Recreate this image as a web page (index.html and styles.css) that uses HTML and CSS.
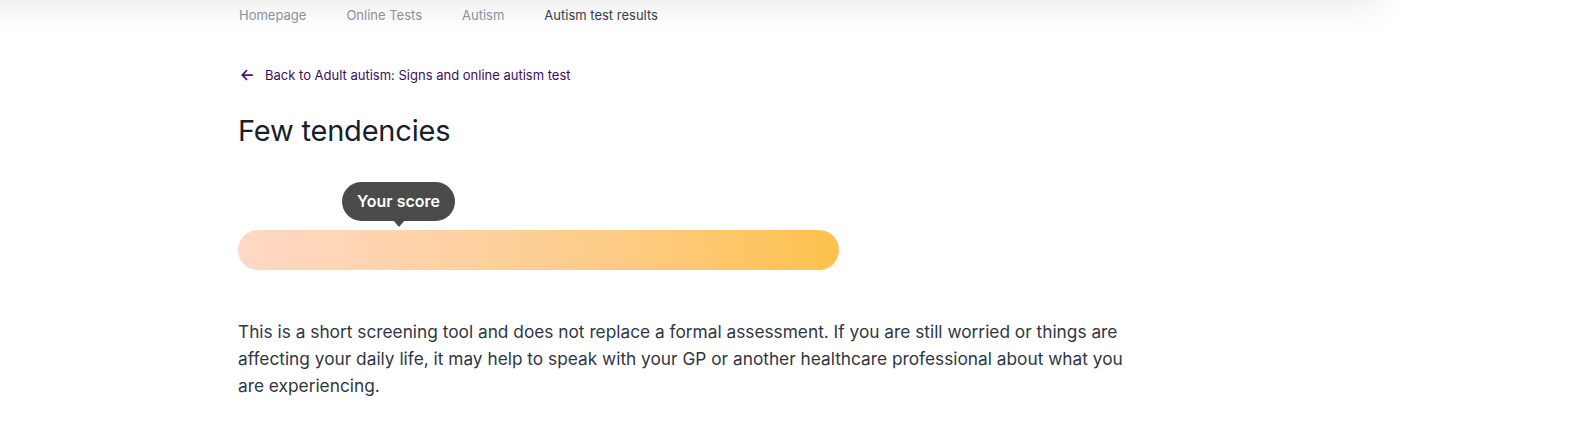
FILE: index.html
```html
<!DOCTYPE html>
<html lang="en">
<head>
<meta charset="utf-8">
<title>Autism test results</title>
<link rel="stylesheet" href="styles.css">
</head>
<body>
<div class="topshadow"></div>
<main class="page">
  <nav class="crumbs">
    <a class="crumb" href="#">Homepage</a>
    <a class="crumb" href="#">Online Tests</a>
    <a class="crumb" href="#">Autism</a>
    <span class="crumb current">Autism test results</span>
  </nav>
  <a class="back" href="#">
    <svg class="back-icon" viewBox="0 0 16 16" width="14" height="14" aria-hidden="true"><path d="M14 8H2.5M7.5 3L2.5 8l5 5" fill="none" stroke="currentColor" stroke-width="2" stroke-linecap="round" stroke-linejoin="round"/></svg>
    <span>Back to Adult autism: Signs and online autism test</span>
  </a>
  <h1 class="title">Few tendencies</h1>
  <div class="scale">
    <div class="tooltip">Your score</div>
    <div class="bar"></div>
  </div>
  <p class="note">This is a short screening tool and does not replace a formal assessment. If you are still worried or things are affecting your daily life, it may help to speak with your GP or another healthcare professional about what you are experiencing.</p>
</main>
</body>
</html>
```

FILE: styles.css
```css
html, body {
  margin: 0;
  padding: 0;
  background: #ffffff;
}
body {
  font-family: Inter, "Noto Sans", sans-serif;
  position: relative;
  overflow: hidden;
  height: 435px;
}
.topshadow {
  position: absolute;
  top: -60px;
  left: -40px;
  width: 1420px;
  height: 60px;
  background: #fff;
  box-shadow: 0 6px 36px rgba(0, 0, 0, 0.09);
}
.page {
  width: 900px;
  margin-left: 239px;
  display: flex;
  flex-direction: column;
}
.crumbs {
  display: flex;
  gap: 40px;
  padding-top: 7px;
  font-size: 13px;
  line-height: 17px;
}
.crumb {
  color: #8d95a5;
  text-decoration: none;
}
.crumb.current {
  color: #3a3f47;
}
.back {
  margin-top: 42px;
  display: flex;
  align-items: center;
  gap: 11px;
  color: #3c0d5c;
  font-size: 13px;
  line-height: 18px;
  text-decoration: none;
  padding-left: 1px;
}
.back-icon {
  color: #4b1470;
}
.title {
  margin: 27px 0 0 -1px;
  font-size: 29px;
  font-weight: 400;
  line-height: 40px;
  color: #17202e;
  letter-spacing: -0.2px;
}
.scale {
  position: relative;
  margin-top: 31px;
  margin-left: -1px;
  width: 601px;
}
.tooltip {
  position: relative;
  margin-left: 104px;
  width: 113px;
  height: 39px;
  border-radius: 20px;
  background: #4a4a4a;
  color: #fff;
  font-size: 16px;
  font-weight: 600;
  line-height: 39px;
  text-align: center;
  margin-bottom: 9px;
}
.tooltip::after {
  content: "";
  position: absolute;
  left: 50%;
  bottom: -6px;
  margin-left: -6px;
  border-left: 6px solid transparent;
  border-right: 6px solid transparent;
  border-top: 7px solid #4a4a4a;
}
.bar {
  height: 40px;
  border-radius: 20px;
  background: linear-gradient(90deg, #ffd8c6 0%, #fed2a4 35%, #fdcb83 65%, #fdc24c 100%);
}
.note {
  margin: 48px 0 0 -1px;
  font-size: 17.3px;
  font-weight: 380;
  line-height: 27px;
  color: #2f3642;
  width: 895px;
}
```
